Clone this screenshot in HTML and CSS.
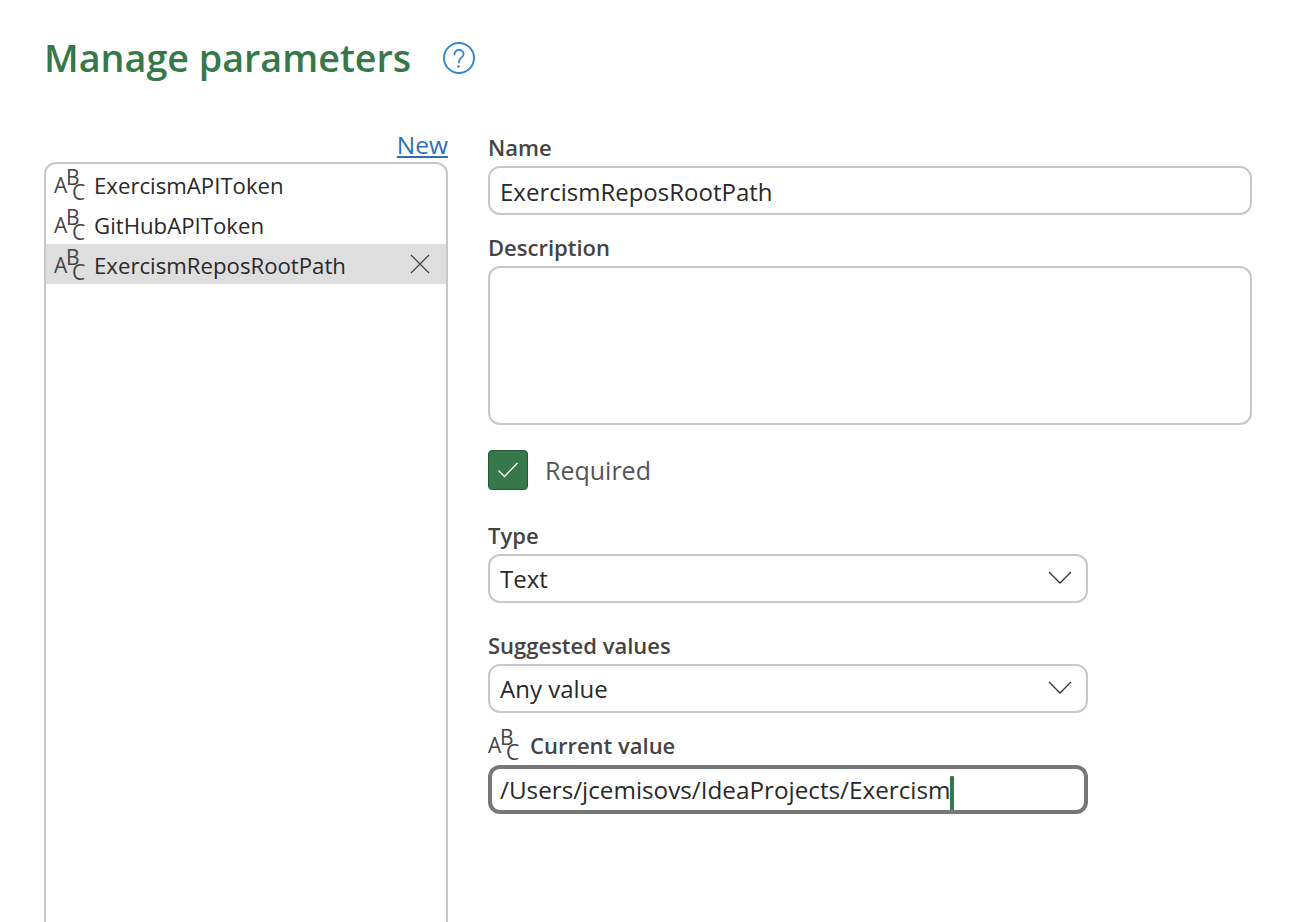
FILE: index.html
```html
<!DOCTYPE html>
<html lang="en">
<head>
  <meta charset="UTF-8" />
  <title>Manage parameters</title>
  <link rel="stylesheet" href="styles.css">
</head>
<body>
  <header class="page-head">
    <h1>Manage parameters</h1>
    <svg class="help-icon" width="32" height="32" viewBox="0 0 32 32" fill="none">
      <circle cx="16" cy="16" r="15" stroke="#3a87c8" stroke-width="2"/>
      <path d="M11.500 12.500c0-2.700 2-4.500 4.600-4.500s4.500 1.700 4.500 4c0 3.600-4.600 3.800-4.600 7.600v1" stroke="#3a87c8" stroke-width="1.800" stroke-linecap="round"/>
      <circle cx="15.500" cy="24.500" r="1.300" fill="#3a87c8"/>
    </svg>
  </header>

  <div class="columns">
    <section class="list-col">
      <a class="new-link" href="#">New</a>
      <ul class="param-list">
        <li class="param-row">
          <svg class="abc" width="32" height="44" viewBox="0 0 32 44"><text x="0" y="31">A</text><text x="12" y="23">B</text><text x="18" y="38">C</text></svg>
          <span>ExercismAPIToken</span>
        </li>
        <li class="param-row">
          <svg class="abc" width="32" height="44" viewBox="0 0 32 44"><text x="0" y="31">A</text><text x="12" y="23">B</text><text x="18" y="38">C</text></svg>
          <span>GitHubAPIToken</span>
        </li>
        <li class="param-row selected">
          <svg class="abc" width="32" height="44" viewBox="0 0 32 44"><text x="0" y="31">A</text><text x="12" y="23">B</text><text x="18" y="38">C</text></svg>
          <span>ExercismReposRootPath</span>
          <svg class="remove" width="20" height="20" viewBox="0 0 20 20"><path d="M1 1l18 18M19 1L1 19" stroke="#444" stroke-width="1.200" fill="none"/></svg>
        </li>
      </ul>
    </section>

    <section class="form-col">
      <label class="field-label">Name</label>
      <div class="box wide">ExercismReposRootPath</div>

      <label class="field-label desc-label">Description</label>
      <div class="box wide textarea"></div>

      <div class="check-row">
        <span class="checkbox">
          <svg width="22" height="18" viewBox="0 0 22 18"><path d="M1.500 9.500l6 6L20.500 2" stroke="#fff" stroke-width="1.300" fill="none"/></svg>
        </span>
        <span class="check-label">Required</span>
      </div>

      <label class="field-label">Type</label>
      <div class="box select">
        Text
        <svg class="chevron" width="24" height="14" viewBox="0 0 24 14"><path d="M1 1l11 11L23 1" stroke="#333" stroke-width="1.300" fill="none"/></svg>
      </div>

      <label class="field-label suggest-label">Suggested values</label>
      <div class="box select">
        Any value
        <svg class="chevron" width="24" height="14" viewBox="0 0 24 14"><path d="M1 1l11 11L23 1" stroke="#333" stroke-width="1.300" fill="none"/></svg>
      </div>

      <div class="current-label">
        <svg class="abc" width="32" height="44" viewBox="0 0 32 44"><text x="0" y="31">A</text><text x="12" y="23">B</text><text x="18" y="38">C</text></svg>
        <label class="field-label">Current value</label>
      </div>
      <div class="box select focused">/Users/jcemisovs/IdeaProjects/Exercism<span class="caret"></span></div>
    </section>
  </div>
</body>
</html>
```

FILE: styles.css
```css
html, body {
  height: 922px;
  overflow: hidden;
}

body {
  margin: 0;
  padding: 0 38px 0 44px;
  background: #fff;
  color: #292929;
  font-family: "Open Sans", "Noto Sans", sans-serif;
  font-size: 23px;
}

.page-head {
  display: flex;
  align-items: center;
  gap: 32px;
  height: 116px;
  margin-bottom: 15px;
}

h1 {
  margin: 0;
  color: #37784a;
  font-size: 37.700px;
  font-weight: 600;
  line-height: 116px;
}

.help-icon {
  flex: none;
}

.columns {
  display: flex;
  gap: 40px;
}

.list-col {
  flex: none;
  width: 404px;
  display: flex;
  flex-direction: column;
}

.new-link {
  align-self: flex-end;
  height: 31px;
  line-height: 28px;
  color: #2f6fb7;
  font-size: 24.500px;
  text-decoration: underline;
}

.param-list {
  list-style: none;
  margin: 0;
  padding: 0;
  height: 800px;
  border: 2px solid #c8c8c8;
  border-radius: 12px;
}

.param-row {
  display: flex;
  align-items: center;
  gap: 8px;
  height: 40px;
  padding: 0 16px 0 8px;
  font-size: 22.200px;
}

.param-row span {
  flex: 1;
  padding-top: 2px;
}

.selected {
  background: #dedede;
}

.abc {
  flex: none;
  font-size: 21px;
  fill: #444;
}

.form-col {
  flex: 1;
  min-width: 0;
  padding-top: 1px;
}

.field-label {
  display: block;
  height: 34px;
  line-height: 31px;
  color: #444;
  font-size: 22px;
  font-weight: 600;
}

.desc-label {
  margin-top: 17px;
}

.suggest-label {
  margin-top: 27px;
}

.box {
  box-sizing: border-box;
  height: 49px;
  padding: 0 10px;
  line-height: 47px;
  border: 2px solid #c8c8c8;
  border-radius: 12px;
  font-size: 24px;
  white-space: nowrap;
}

.textarea {
  height: 159px;
}

.select {
  position: relative;
  width: 600px;
  line-height: 45px;
}

.chevron {
  position: absolute;
  right: 14px;
  top: 15px;
}

.check-row {
  display: flex;
  align-items: center;
  gap: 17px;
  margin: 25px 0 31px;
  height: 39px;
}

.checkbox {
  box-sizing: border-box;
  display: flex;
  align-items: center;
  justify-content: center;
  width: 40px;
  height: 40px;
  background: #37784a;
  border: 1px solid #255a35;
  border-radius: 4px;
}

.check-label {
  color: #555;
  font-size: 25px;
}

.current-label {
  display: flex;
  align-items: center;
  gap: 10px;
  height: 40px;
  margin-top: 11px;
  margin-bottom: 1px;
}

.current-label .field-label {
  margin-top: 6px;
}

.focused {
  border: 4px solid #777;
  padding: 0 8px;
  font-size: 24.250px;
  line-height: 42px;
}

.caret {
  display: inline-block;
  width: 4px;
  height: 34px;
  vertical-align: middle;
  background: #37784a;
  border-radius: 1px;
}
```
